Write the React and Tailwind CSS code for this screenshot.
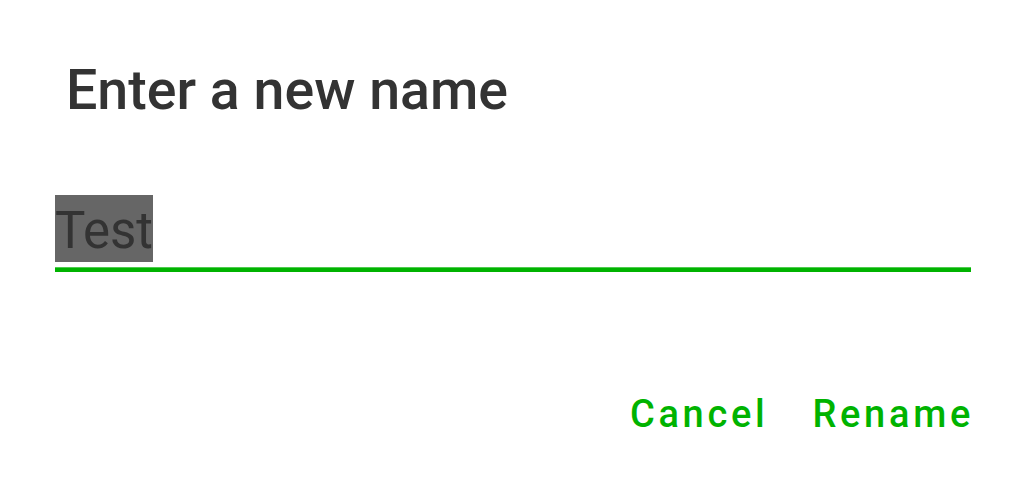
export default function App() {
  return (
    <div className="w-[1026px] h-[490px] bg-white font-['Roboto',sans-serif] flex flex-col pl-[55px] pr-[55px]">
      <h1 className="pt-[58px] pl-[11px] text-[55.5px] leading-[65px] font-medium text-[#333333]">
        Enter a new name
      </h1>
      <div className="mt-[72px] flex">
        <span className="inline-block h-[67px] leading-[67px] bg-[#666666] text-[51px] text-[#333333] pt-[2px]">
          Test
        </span>
      </div>
      <div className="mt-[5px] h-[5px] bg-[#00b300] border-t border-[#4fcc4f]" />
      <div className="mt-[120px] flex justify-end gap-[44px] mr-[-3px]">
        <button className="text-[38px] leading-[45px] font-medium tracking-[3.7px] text-[#00b300]">
          Cancel
        </button>
        <button className="text-[38px] leading-[45px] font-medium tracking-[3.7px] text-[#00b300]">
          Rename
        </button>
      </div>
    </div>
  );
}
